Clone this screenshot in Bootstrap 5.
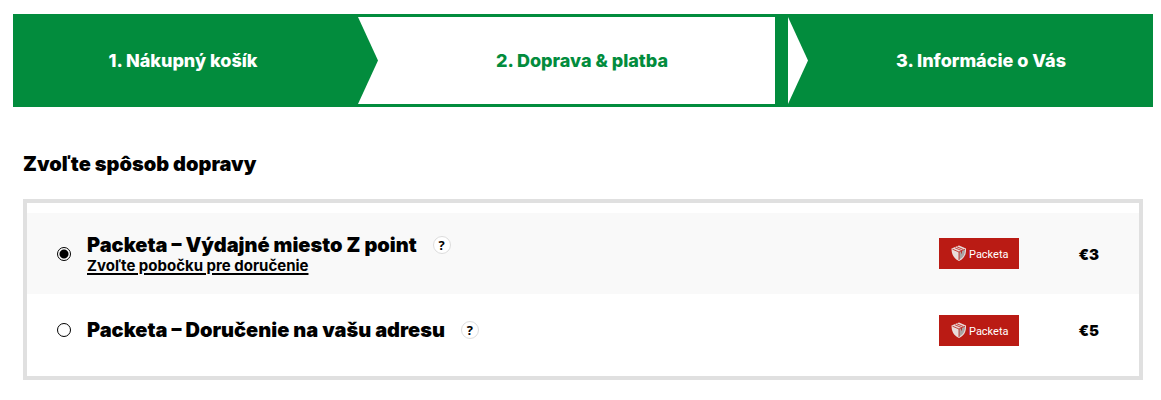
<!DOCTYPE html>
<html lang="sk">
<head>
<meta charset="utf-8">
<meta name="viewport" content="width=device-width, initial-scale=1">
<title>Doprava &amp; platba</title>
<link href="https://cdn.jsdelivr.net/npm/bootstrap@5.3.0/dist/css/bootstrap.min.css" rel="stylesheet">
<style>
:root { --shop-green: #028c3d; }
body { font-family: Inter, "Open Sans", sans-serif; color: #000; background: #fff; }
.shop-page { padding: 14px 8px 20px 13px; }
.steps { background: var(--shop-green); border: 3px solid var(--shop-green); height: 93px; }
.step { position: relative; font-size: 18px; line-height: 24px; font-weight: 800; color: #fff; }
.step a { color: inherit; text-decoration: none; }
.step-cart { width: calc(100% * 342 / 1134); padding-right: 8px; }
.step-delivery { width: calc(100% * 417 / 1134); padding-left: 31px; background: #fff; color: var(--shop-green); margin-right: 13px; }
.step-info { flex: 1; padding-left: 24px; }
.step + .step::before { content: ""; position: absolute; left: 0; top: 0; bottom: 0; width: 20px; background: var(--shop-green); clip-path: polygon(0 0, 100% 50%, 0 100%); }
.step-info.step::before { background: #fff; }
.shipping { padding: 44px 10px 0; }
.shipping-title { font-size: 20px; line-height: 26px; font-weight: 900; margin-bottom: 22px; }
.options { border: 4px solid #e0e0e0; padding: 10px 0; }
.option { padding: 0 40px 0 30px; min-height: 72px; }
.option-selected { background: #f9f9f9; min-height: 81px; }
.option-radio { appearance: none; width: 14px; height: 14px; border: 1px solid #000; border-radius: 50%; background: #fff; margin: 0 16px 0 0; flex: none; }
.option-radio:checked { background: radial-gradient(circle, #000 4px, #fff 5px); }
.option-name { font-size: 20px; line-height: 24px; font-weight: 900; }
.pick-point { font-size: 15px; line-height: 18px; font-weight: 700; color: #000; text-decoration-thickness: 2px; text-underline-offset: 2px; }
.help { width: 18px; height: 18px; border: 1px solid #ddd; border-radius: 50%; background: #fff; color: #000; font: 700 13px/16px "Open Sans", sans-serif; padding: 0; }
.carrier { width: 80px; height: 31px; background: #ba1b14; flex: none; }
.price { font-size: 15px; line-height: 18px; font-weight: 900; width: 80px; padding-top: 2px; text-align: right; }
</style>
</head>
<body>
<svg class="d-none" aria-hidden="true">
  <symbol id="packeta" viewBox="0 0 80 31">
    <path d="M12.500 10.500L20 7.500l7 3c.3 5.500-1.500 10-7 12.500-5.500-2.500-7.500-7-7.500-12.500z" fill="#e9dcda"/>
    <path d="M20 14l6-2.500c0 4.500-1.500 8-6 10z" fill="#a9a3a2"/>
    <path d="M13.500 11.200L20 14l6-2.800M20 14v8M16 9.800l6.500 2.700v3M18 8.800l6.300 2.700" fill="none" stroke="#ba1b14" stroke-width=".8"/>
    <text x="30" y="20" fill="#fff" font-family="Roboto, sans-serif" font-size="11">Packeta</text>
  </symbol>
</svg>
<main class="shop-page">
  <nav class="steps d-flex" aria-label="Kroky objednávky">
    <div class="step step-cart d-flex align-items-center justify-content-center"><a href="#">1. Nákupný košík</a></div>
    <div class="step step-delivery d-flex align-items-center justify-content-center"><a href="#" aria-current="step">2. Doprava &amp; platba</a></div>
    <div class="step step-info d-flex align-items-center justify-content-center"><a href="#">3. Informácie o Vás</a></div>
  </nav>
  <section class="shipping">
    <h2 class="shipping-title">Zvoľte spôsob dopravy</h2>
    <div class="options">
      <div class="option option-selected d-flex align-items-center">
        <input class="option-radio" type="radio" name="shipping" id="ship-point" checked>
        <div class="me-auto">
          <div class="d-flex align-items-center gap-3">
            <label class="option-name" for="ship-point">Packeta – Výdajné miesto Z point</label>
            <button class="help" type="button">?</button>
          </div>
          <a class="pick-point d-block" href="#">Zvoľte pobočku pre doručenie</a>
        </div>
        <svg class="carrier" role="img" aria-label="Packeta"><use href="#packeta"/></svg>
        <div class="price">€3</div>
      </div>
      <div class="option d-flex align-items-center">
        <input class="option-radio" type="radio" name="shipping" id="ship-home">
        <div class="d-flex align-items-center gap-3 me-auto">
          <label class="option-name" for="ship-home">Packeta – Doručenie na vašu adresu</label>
          <button class="help" type="button">?</button>
        </div>
        <svg class="carrier" role="img" aria-label="Packeta"><use href="#packeta"/></svg>
        <div class="price">€5</div>
      </div>
    </div>
  </section>
</main>
<script src="https://cdn.jsdelivr.net/npm/bootstrap@5.3.0/dist/js/bootstrap.bundle.min.js"></script>
</body>
</html>
